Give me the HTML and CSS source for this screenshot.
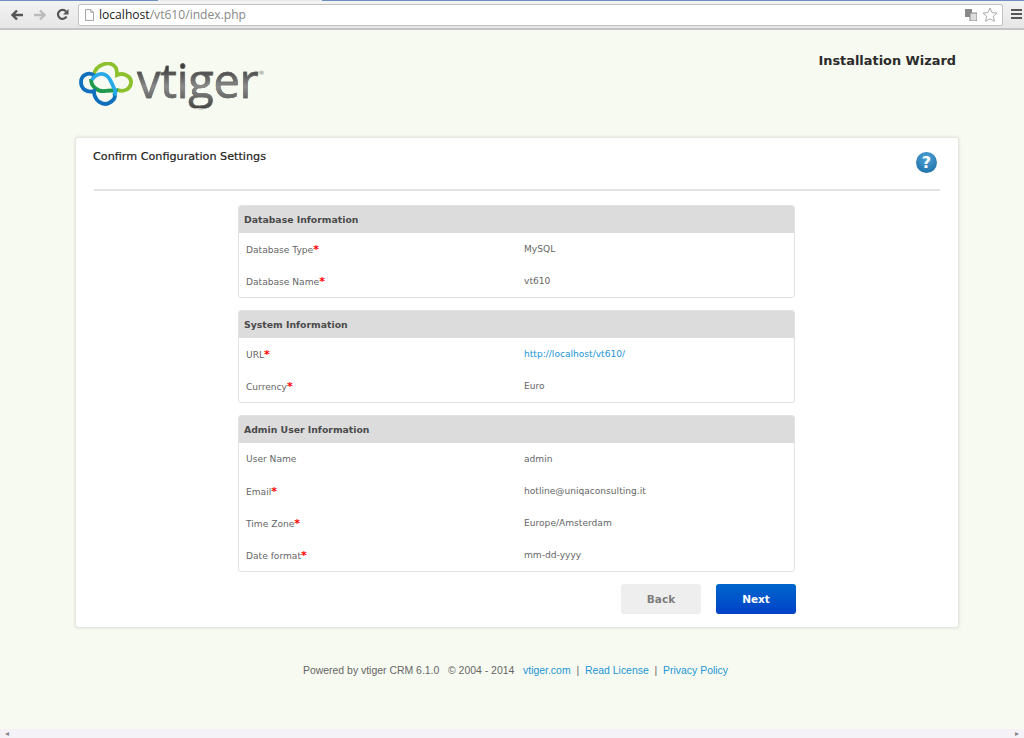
FILE: index.html
```html
<!DOCTYPE html>
<html lang="en">
<head>
<meta charset="UTF-8">
<meta name="viewport" content="width=device-width, initial-scale=1.0">
<title>vtiger CRM Installation Wizard</title>
<link rel="stylesheet" href="styles.css">
</head>
<body>
<div class="browser-bar">
  <svg class="nav-icon" width="14" height="12" viewBox="0 0 14 12"><path d="M13 6H3M7 1.500L2.500 6 7 10.500" fill="none" stroke="#555" stroke-width="2.400"/></svg>
  <svg class="nav-icon" width="14" height="12" viewBox="0 0 14 12"><path d="M1 6h10M7 1.500L11.500 6 7 10.500" fill="none" stroke="#bbb" stroke-width="2.400"/></svg>
  <svg class="nav-icon" width="13" height="13" viewBox="0 0 13 13"><path d="M10.500 8.500A4.500 4.500 0 1 1 10 3.500" fill="none" stroke="#555" stroke-width="2.200"/><path d="M12.500 1v5.500H7z" fill="#555"/></svg>
  <div class="address-box">
    <svg width="9" height="12" viewBox="0 0 10 13"><path d="M.5.500h6l3 3v9H.5zM6.500.500v3h3" fill="#fff" stroke="#999"/></svg>
    <span class="address"><span class="host">localhost</span>/vt610/index.php</span>
    <svg class="translate-icon" width="12" height="12" viewBox="0 0 12 12"><rect x="0" y="0" width="7" height="8" fill="#888"/><rect x="5" y="4" width="7" height="8" fill="#ddd" stroke="#888"/></svg>
    <svg width="16" height="15" viewBox="0 0 16 15"><path d="M8 1l2.100 4.600 4.900.500-3.700 3.300 1.100 4.900L8 11.800l-4.400 2.500 1.100-4.900L1 6.100l4.900-.500z" fill="#fff" stroke="#aaa"/></svg>
  </div>
  <div class="menu-icon"><i></i><i></i><i></i></div>
</div>

<div class="page">
  <div class="page-head">
    <div class="logo">
      <svg width="58" height="46" viewBox="0 0 58 46">
        <path d="M12 17C12 24 18 30 26 29C31 28 35 29 40 28" fill="none" stroke="#1f9a4c" stroke-width="3.800"/>
        <path d="M15 12C17 3 31 -3 37 6C38 8 38 11 38 13C45 10 53 15 52 21C51 28 44 30 39 28" fill="none" stroke="#8cc02c" stroke-width="3.800"/>
        <path d="M16 14C10 9 2 13 2 20C2 27 8 31 15 29C15 39 24 44 30 41C36 38 37 34 35 31" fill="none" stroke="#1070bd" stroke-width="3.800"/>
        <path d="M13 18C16 12 24 10 28 14C32 17 33 23 36 28C37 30 36 32 35 33" fill="none" stroke="#27a9e8" stroke-width="3.800"/>
      </svg>
      <span class="logo-text">vtiger</span><span class="logo-reg">®</span>
    </div>
    <div class="wizard-title">Installation Wizard</div>
  </div>

  <div class="card">
    <div class="card-head">
      <h4>Confirm Configuration Settings</h4>
      <span class="help">?</span>
    </div>
    <hr class="card-rule">

    <div class="panels">
      <div class="panel">
        <div class="panel-title">Database Information</div>
        <div class="row"><span class="label">Database Type<b>*</b></span><span>MySQL</span></div>
        <div class="row"><span class="label">Database Name<b>*</b></span><span>vt610</span></div>
      </div>
      <div class="panel">
        <div class="panel-title">System Information</div>
        <div class="row"><span class="label">URL<b>*</b></span><a href="#">http://localhost/vt610/</a></div>
        <div class="row"><span class="label">Currency<b>*</b></span><span>Euro</span></div>
      </div>
      <div class="panel">
        <div class="panel-title">Admin User Information</div>
        <div class="row"><span class="label">User Name</span><span>admin</span></div>
        <div class="row"><span class="label">Email<b>*</b></span><span>hotline@uniqaconsulting.it</span></div>
        <div class="row"><span class="label">Time Zone<b>*</b></span><span>Europe/Amsterdam</span></div>
        <div class="row"><span class="label">Date format<b>*</b></span><span>mm-dd-yyyy</span></div>
      </div>
      <div class="actions">
        <button type="button" class="btn-back">Back</button>
        <button type="button" class="btn-next">Next</button>
      </div>
    </div>
  </div>

  <div class="footer">
    Powered by vtiger CRM 6.1.0 &nbsp; © 2004 - 2014 &nbsp;
    <a href="#">vtiger.com</a> &nbsp;|&nbsp; <a href="#">Read License</a> &nbsp;|&nbsp; <a href="#">Privacy Policy</a>
  </div>
</div>

<div class="scroll-strip"><span>◂</span><span>▸</span></div>
</body>
</html>
```
FILE: styles.css
```css
* {
  box-sizing: border-box;
}

body {
  margin: 0;
  height: 738px;
  overflow: hidden;
  display: flex;
  flex-direction: column;
  background: #f7faf0;
  font-family: "DejaVu Sans", Verdana, sans-serif;
  font-size: 9.100px;
  color: #666;
}

a {
  color: #2295d6;
  text-decoration: none;
}

/* browser toolbar */
.browser-bar {
  height: 30px;
  flex: none;
  display: flex;
  align-items: center;
  padding: 1px 2px 0 10px;
  gap: 9px;
  background: linear-gradient(to right, #6e8fc0 158px, #e8e8e8 158px, #e8e8e8 322px, #6e8fc0 322px) top / 100% 1px no-repeat, linear-gradient(#f4f4f4, #e6e6e6);
  border-bottom: 2px solid #c4c4c4;
}

.address-box {
  flex: 1;
  height: 22px;
  display: flex;
  align-items: center;
  gap: 5px;
  padding: 0 4px 0 6px;
  background: #fff;
  border: 1px solid #c2c2c2;
  border-radius: 2px;
}

.address {
  flex: 1;
  font-family: "Open Sans", sans-serif;
  font-size: 12.100px;
  color: #888;
}

.host {
  color: #222;
}

.menu-icon {
  width: 11px;
  margin-left: -1px;
}

.menu-icon i {
  display: block;
  height: 2px;
  margin-bottom: 2px;
  background: #555;
}

/* page */
.page {
  flex: 1;
  width: 884px;
  margin-left: 75px;
}

.page-head {
  height: 107px;
  display: flex;
  justify-content: space-between;
}

.logo {
  display: flex;
  align-items: flex-start;
  padding: 32px 0 0 4px;
}

.logo-text {
  margin: -10px 0 0 0;
  font-family: "Open Sans", sans-serif;
  font-size: 47px;
  line-height: 56px;
  letter-spacing: -.3px;
  -webkit-text-stroke: .5px #666;
  background: linear-gradient(#3e3e3e 30%, #8d8d8d 62%, #444);
  -webkit-background-clip: text;
  background-clip: text;
  color: transparent;
}

.logo-reg {
  font-size: 6px;
  margin-top: 7px;
  color: #777;
}

.wizard-title {
  margin: 22px 3px 0 0;
  font-size: 12.900px;
  font-weight: bold;
  line-height: 17px;
  color: #2b2b2b;
}

.card {
  height: 491px;
  padding: 0 18px;
  background: #fff;
  border: 1px solid #e4e6e0;
  border-radius: 3px;
  box-shadow: 0 0 3px #d8dad2;
}

.card-head {
  height: 51px;
  display: flex;
  justify-content: space-between;
  align-items: flex-start;
}

.card-head h4 {
  margin: 12px 0 0 -1px;
  font-size: 11.200px;
  font-weight: normal;
  line-height: 14px;
  color: #222;
  -webkit-text-stroke: .2px #222;
}

.help {
  width: 21px;
  height: 21px;
  margin: 14px 3px 0 0;
  border-radius: 50%;
  background: radial-gradient(circle at 50% 30%, #4da3d8, #17699f);
  color: #fff;
  font-size: 16px;
  font-weight: bold;
  line-height: 21px;
  text-align: center;
}

.card-rule {
  margin: 0 0 14px;
  border: 0;
  border-top: 2px solid #e2e2e2;
}

.panels {
  width: 558px;
  margin-left: 144px;
}

.panel {
  margin-bottom: 12px;
  margin-right: 1px;
  background: #fff;
  border: 1px solid #e2e2e2;
  border-radius: 3px;
  overflow: hidden;
}

.panel-title {
  height: 28px;
  margin: -1px -1px 0;
  padding-left: 6px;
  background: #dcdcdc;
  font-size: 9.300px;
  font-weight: bold;
  line-height: 29px;
  color: #4a4a4a;
}

.row {
  height: 32px;
  display: flex;
  align-items: center;
  padding-left: 7px;
}

.label {
  width: 278px;
}

.label b {
  color: #f00;
  font-size: 11px;
}

.actions {
  display: flex;
  justify-content: flex-end;
  gap: 15px;
}

.actions button {
  width: 80px;
  height: 30px;
  padding-bottom: 2px;
  border: 0;
  border-radius: 3px;
  font-family: inherit;
  font-size: 10.500px;
  font-weight: bold;
}

.btn-back {
  background: #eee;
  color: #7d7d7d;
}

.btn-next {
  background: linear-gradient(#0066cc, #0042c8);
  color: #fff;
}

.footer {
  margin-top: 37px;
  margin-right: 3px;
  text-align: center;
  font-family: "Liberation Sans", Arial, sans-serif;
  font-size: 10.450px;
  color: #666;
}

.scroll-strip {
  height: 9px;
  flex: none;
  display: flex;
  justify-content: space-between;
  padding: 0 5px;
  background: #f4f2f7;
  font-size: 8px;
  line-height: 9px;
  color: #888;
}
```
